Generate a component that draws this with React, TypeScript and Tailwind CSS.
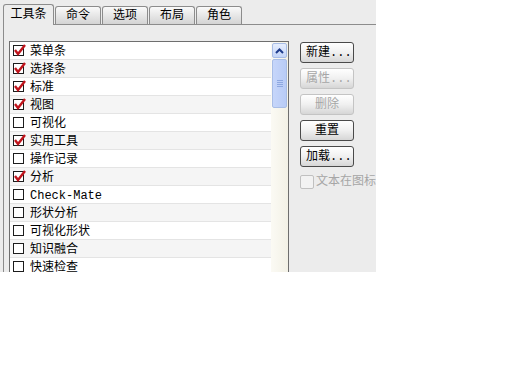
const items: { label: string; checked: boolean }[] = [
  { label: "菜单条", checked: true },
  { label: "选择条", checked: true },
  { label: "标准", checked: true },
  { label: "视图", checked: true },
  { label: "可视化", checked: false },
  { label: "实用工具", checked: true },
  { label: "操作记录", checked: false },
  { label: "分析", checked: true },
  { label: "Check-Mate", checked: false },
  { label: "形状分析", checked: false },
  { label: "可视化形状", checked: false },
  { label: "知识融合", checked: false },
  { label: "快速检查", checked: false },
];

const tabs = ["工具条", "命令", "选项", "布局", "角色"];

const buttons = [
  { label: "新建...", disabled: false, center: false },
  { label: "属性...", disabled: true, center: false },
  { label: "删除", disabled: true, center: true },
  { label: "重置", disabled: false, center: true },
  { label: "加载...", disabled: false, center: false },
];

function Check({ checked }: { checked: boolean }) {
  return (
    <div className="relative w-[11px] h-[11px] border border-[#1c1c1c] bg-white shrink-0">
      {checked && (
        <svg className="absolute -left-[1px] -top-[2px]" width="13" height="13" viewBox="0 0 13 13">
          <path d="M2 6 L5 10 L12 1" stroke="#c0141c" strokeWidth="2.4" fill="none" strokeLinejoin="miter" />
        </svg>
      )}
    </div>
  );
}

export default function App() {
  return (
    <div
      className="w-[376px] h-[272px] overflow-hidden bg-[#ececec] text-[12px] text-black"
      style={{ fontFamily: '"Liberation Mono", "Noto Sans CJK SC", monospace' }}
    >
      <div className="flex items-end pl-[3px] pt-[3px] h-[24px]">
        {tabs.map((t, i) =>
          i === 0 ? (
            <div
              key={t}
              className="relative z-10 h-[21px] w-[51px] -mb-[1px] flex items-center justify-center border border-b-0 border-[#8c8c8c] rounded-t-[3px] bg-[#ececec] leading-none"
            >
              {t}
            </div>
          ) : (
            <div
              key={t}
              className="h-[18px] w-[46px] ml-[1px] flex items-center justify-center border border-b-0 border-[#8c8c8c] rounded-t-[3px] bg-gradient-to-b from-[#fafafa] to-[#d4d4d4] leading-none"
            >
              {t}
            </div>
          )
        )}
      </div>
      <div className="ml-[3px] h-[260px] border-l border-t border-[#8c8c8c] flex pl-[5px] pt-[16px]">
        <div className="w-[280px] h-[250px] border border-[#6e6e6e] bg-white flex shrink-0">
          <div className="flex-1 flex flex-col">
            {items.map((it, i) => (
              <div
                key={it.label}
                className={`h-[18px] shrink-0 flex items-center gap-[6px] pl-[3px] border-b border-[#e4e4e4] ${
                  i % 2 === 1 ? "bg-[#f5f5f5]" : "bg-white"
                }`}
              >
                <Check checked={it.checked} />
                <span className="relative top-[1px] leading-none whitespace-nowrap">{it.label}</span>
              </div>
            ))}
          </div>
          <div className="w-[17px] flex flex-col items-center pt-[1px] bg-gradient-to-r from-[#fbfaf4] to-[#f3f1e6]">
            <div className="w-[15px] h-[15px] rounded-[2px] border border-[#a8bde6] bg-gradient-to-b from-[#e6eefe] to-[#c4d5f8] flex items-center justify-center">
              <svg width="9" height="6" viewBox="0 0 9 6">
                <path d="M1 5 L4.5 1.5 L8 5" stroke="#1e3c8c" strokeWidth="2" fill="none" />
              </svg>
            </div>
            <div className="w-[15px] h-[49px] mt-[1px] rounded-[2px] border border-[#a8bde6] bg-gradient-to-r from-[#c6d6fa] to-[#b8cbf6] flex flex-col items-center justify-center gap-[1px]">
              <div className="w-[6px] h-[1px] bg-[#8ea8e0]" />
              <div className="w-[6px] h-[1px] bg-[#8ea8e0]" />
              <div className="w-[6px] h-[1px] bg-[#8ea8e0]" />
              <div className="w-[6px] h-[1px] bg-[#8ea8e0]" />
            </div>
          </div>
        </div>
        <div className="ml-[11px] pt-[1px] flex flex-col gap-[5px] w-[80px] shrink-0">
          {buttons.map((b) => (
            <div
              key={b.label}
              className={`w-[54px] h-[21px] rounded-[3px] border flex items-center leading-none bg-gradient-to-b from-[#ffffff] via-[#f0f0f0] to-[#d6d6d6] ${
                b.center ? "justify-center" : "pl-[5px]"
              } ${b.disabled ? "border-[#c4c4c4] text-[#a6a6a6]" : "border-[#4a4a4a] text-black"}`}
            >
              {b.label}
            </div>
          ))}
          <div className="flex items-center gap-[2px] mt-[3px] whitespace-nowrap text-[#a6a6a6]">
            <div className="w-[14px] h-[14px] rounded-[2px] border border-[#c0c0c0] bg-[#f2f2f2] shrink-0" />
            <span className="leading-none">文本在图标</span>
          </div>
        </div>
      </div>
    </div>
  );
}
